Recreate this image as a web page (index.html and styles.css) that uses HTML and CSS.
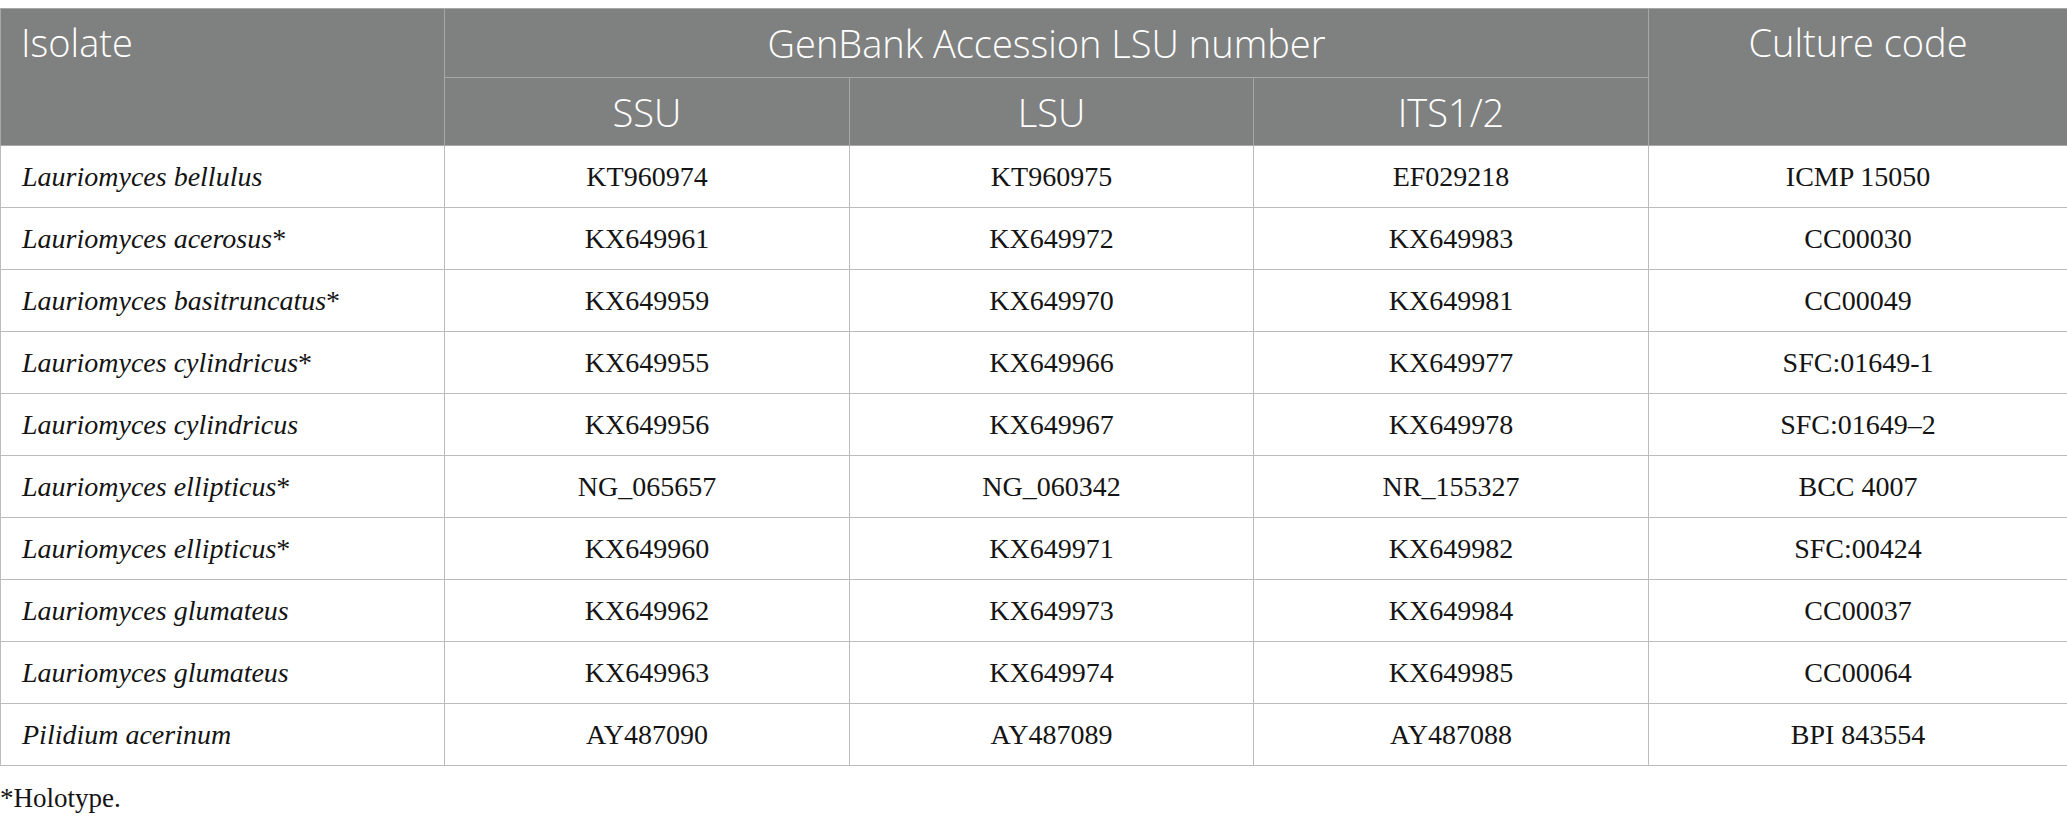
FILE: index.html
```html
<!DOCTYPE html>
<html>
<head>
<meta charset="utf-8">
<link rel="stylesheet" href="styles.css">
</head>
<body>
<table class="data">
  <colgroup>
    <col class="c1"><col class="c2"><col class="c3"><col class="c4"><col class="c5">
  </colgroup>
  <thead>
    <tr class="h1">
      <th rowspan="2" class="top left">Isolate</th>
      <th colspan="3">GenBank Accession LSU number</th>
      <th rowspan="2" class="top">Culture code</th>
    </tr>
    <tr class="h2">
      <th>SSU</th>
      <th>LSU</th>
      <th>ITS1/2</th>
    </tr>
  </thead>
  <tbody>
    <tr><td class="name"><i>Lauriomyces bellulus</i></td><td>KT960974</td><td>KT960975</td><td>EF029218</td><td>ICMP 15050</td></tr>
    <tr><td class="name"><i>Lauriomyces acerosus</i>*</td><td>KX649961</td><td>KX649972</td><td>KX649983</td><td>CC00030</td></tr>
    <tr><td class="name"><i>Lauriomyces basitruncatus</i>*</td><td>KX649959</td><td>KX649970</td><td>KX649981</td><td>CC00049</td></tr>
    <tr><td class="name"><i>Lauriomyces cylindricus</i>*</td><td>KX649955</td><td>KX649966</td><td>KX649977</td><td>SFC:01649-1</td></tr>
    <tr><td class="name"><i>Lauriomyces cylindricus</i></td><td>KX649956</td><td>KX649967</td><td>KX649978</td><td>SFC:01649–2</td></tr>
    <tr><td class="name"><i>Lauriomyces ellipticus</i>*</td><td>NG_065657</td><td>NG_060342</td><td>NR_155327</td><td>BCC 4007</td></tr>
    <tr><td class="name"><i>Lauriomyces ellipticus</i>*</td><td>KX649960</td><td>KX649971</td><td>KX649982</td><td>SFC:00424</td></tr>
    <tr><td class="name"><i>Lauriomyces glumateus</i></td><td>KX649962</td><td>KX649973</td><td>KX649984</td><td>CC00037</td></tr>
    <tr><td class="name"><i>Lauriomyces glumateus</i></td><td>KX649963</td><td>KX649974</td><td>KX649985</td><td>CC00064</td></tr>
    <tr><td class="name"><i>Pilidium acerinum</i></td><td>AY487090</td><td>AY487089</td><td>AY487088</td><td>BPI 843554</td></tr>
  </tbody>
</table>
<p class="note">*Holotype.</p>
</body>
</html>
```
FILE: styles.css
```css
html, body {
  margin: 0;
  padding: 0;
  background: #ffffff;
}
body {
  padding-top: 8px;
  font-family: "Liberation Serif", "Times New Roman", serif;
  color: #141414;
}
.data {
  border-collapse: collapse;
  width: 2067px;
  table-layout: fixed;
}
.c1 { width: 444px; }
.c2 { width: 405px; }
.c3 { width: 404px; }
.c4 { width: 395px; }
.c5 { width: 419px; }
.data th {
  background: #7f8180;
  color: #ffffff;
  font-family: "Open Sans", "Noto Sans", sans-serif;
  font-weight: 300;
  font-size: 38px;
  line-height: 44px;
  text-align: center;
  border: 1px solid #a6a8a7;
  padding: 0 20px;
  vertical-align: middle;
}
.data th.top {
  vertical-align: top;
  padding-top: 11px;
}
.data th.left {
  text-align: left;
}
.h1 { height: 69px; }
.h2 { height: 68px; }
.data td {
  height: 61px;
  border: 1px solid #bcbcbc;
  font-size: 28px;
  text-align: center;
  vertical-align: middle;
  padding: 0 20px;
  color: #141414;
}
.data td.name {
  text-align: left;
  padding-left: 21px;
}
.note {
  margin: 17px 0 0 0;
  font-size: 27px;
  color: #141414;
}
```
